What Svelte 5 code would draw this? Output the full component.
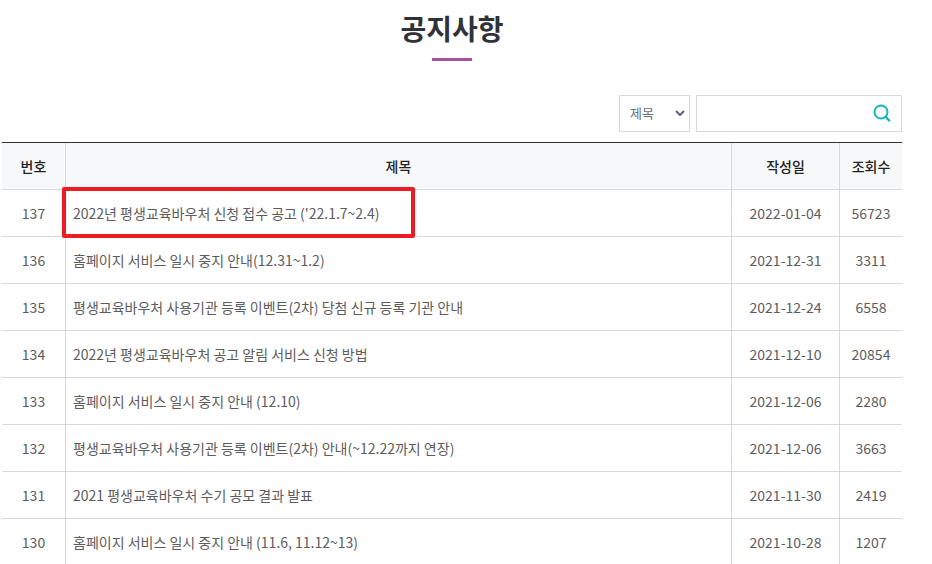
<script>
  const notices = [
    { no: 137, title: "2022년 평생교육바우처 신청 접수 공고 ('22.1.7~2.4)", date: '2022-01-04', views: 56723, marked: true },
    { no: 136, title: '홈페이지 서비스 일시 중지 안내(12.31~1.2)', date: '2021-12-31', views: 3311 },
    { no: 135, title: '평생교육바우처 사용기관 등록 이벤트(2차) 당첨 신규 등록 기관 안내', date: '2021-12-24', views: 6558 },
    { no: 134, title: '2022년 평생교육바우처 공고 알림 서비스 신청 방법', date: '2021-12-10', views: 20854 },
    { no: 133, title: '홈페이지 서비스 일시 중지 안내 (12.10)', date: '2021-12-06', views: 2280 },
    { no: 132, title: '평생교육바우처 사용기관 등록 이벤트(2차) 안내(~12.22까지 연장)', date: '2021-12-06', views: 3663 },
    { no: 131, title: '2021 평생교육바우처 수기 공모 결과 발표', date: '2021-11-30', views: 2419 },
    { no: 130, title: '홈페이지 서비스 일시 중지 안내 (11.6, 11.12~13)', date: '2021-10-28', views: 1207 }
  ];
  let field = $state('title');
  let query = $state('');
</script>

<main>
  <h1>공지사항</h1>

  <form class="search" onsubmit={(e) => e.preventDefault()}>
    <div class="picker">
      <select bind:value={field} aria-label="검색 구분">
        <option value="title">제목</option>
      </select>
      <svg class="chevron" width="10" height="6" viewBox="0 0 10 6" aria-hidden="true">
        <path d="M1 1l4 4 4-4" fill="none" stroke="#5f6378" stroke-width="2" />
      </svg>
    </div>
    <div class="query">
      <input type="text" bind:value={query} aria-label="검색어" />
      <button type="submit" aria-label="검색">
        <svg width="18" height="18" viewBox="0 0 18 18" aria-hidden="true">
          <circle cx="8" cy="8" r="6.5" fill="none" stroke="#17b5bd" stroke-width="2" />
          <path d="M12 12L16.8 17.2" fill="none" stroke="#17b5bd" stroke-width="2.4" />
        </svg>
      </button>
    </div>
  </form>

  <table>
    <colgroup>
      <col class="c-no" /><col /><col class="c-date" /><col class="c-views" />
    </colgroup>
    <thead>
      <tr>
        <th scope="col">번호</th>
        <th scope="col">제목</th>
        <th scope="col">작성일</th>
        <th scope="col">조회수</th>
      </tr>
    </thead>
    <tbody>
      {#each notices as n (n.no)}
        <tr>
          <td>{n.no}</td>
          <td class="subject" class:marked={n.marked}><a href="#notice-{n.no}">{n.title}</a></td>
          <td>{n.date}</td>
          <td>{n.views}</td>
        </tr>
      {/each}
    </tbody>
  </table>
</main>

<style>
  :global(body) {
    background: #fff;
    overflow-x: hidden;
  }
  main {
    padding: 8px 30px 0 2px;
    font-family: 'Noto Sans CJK KR', 'Noto Sans', sans-serif;
    font-size: 14px;
    color: #5c5c5c;
  }
  h1 {
    margin: 0;
    font-size: 28px;
    line-height: 40px;
    font-weight: 700;
    color: #2f3237;
    text-align: center;
  }
  h1::after {
    content: '';
    display: block;
    width: 40px;
    height: 3px;
    margin: 10px auto 0;
    background: #a6519f;
  }
  .search {
    display: flex;
    justify-content: flex-end;
    gap: 6px;
    margin: 34px 0 10px;
  }
  .picker {
    position: relative;
    width: 71px;
  }
  select,
  .query {
    box-sizing: border-box;
    height: 37px;
    border: 1px solid #d5d8dd;
    background: #fff;
  }
  select {
    width: 100%;
    padding: 0 10px 2px;
    appearance: none;
    border-radius: 0;
    font-family: inherit;
    font-size: 13px;
    color: #6b6f7b;
  }
  .chevron {
    position: absolute;
    right: 5px;
    top: 15px;
    pointer-events: none;
  }
  .query {
    display: flex;
    width: 206px;
  }
  .query input {
    flex: 1;
    min-width: 0;
    padding: 0 10px;
    border: 0;
    outline: 0;
    background: none;
    font: inherit;
  }
  .query button {
    display: flex;
    align-items: center;
    justify-content: center;
    width: 38px;
    padding: 0 0 1px;
    border: 0;
    background: none;
    cursor: pointer;
  }
  table {
    width: 100%;
    table-layout: fixed;
    border-collapse: separate;
    border-spacing: 0;
    border-top: 1px solid #2f3237;
  }
  .c-no {
    width: 64px;
  }
  .c-date {
    width: 108px;
  }
  .c-views {
    width: 62px;
  }
  th,
  td {
    height: 46px;
    padding: 0;
    line-height: 20px;
    text-align: center;
    border-right: 1px solid #d5d8dd;
    border-bottom: 1px solid #d5d8dd;
  }
  th:last-child,
  td:last-child {
    border-right: 0;
  }
  th {
    background: #f7f8fa;
    font-weight: 500;
    color: #222;
  }
  .subject {
    padding-left: 7px;
    text-align: left;
  }
  .subject a {
    color: inherit;
    text-decoration: none;
  }
  .marked {
    position: relative;
  }
  .marked::after {
    content: '';
    position: absolute;
    left: -4px;
    top: -3px;
    box-sizing: border-box;
    width: 353px;
    height: 51px;
    border: 4px solid #ed1c24;
    border-radius: 2px;
    pointer-events: none;
  }
</style>
